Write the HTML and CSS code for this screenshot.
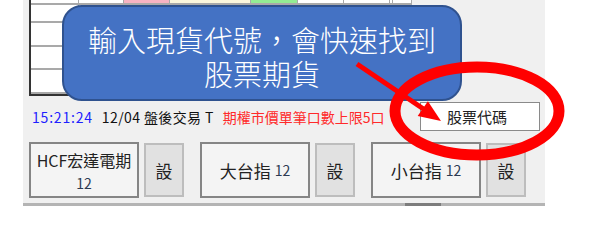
FILE: index.html
```html
<!DOCTYPE html>
<html lang="zh-Hant">
<head>
    <meta charset="UTF-8">
    <title>股票期貨</title>
    <link rel="stylesheet" href="styles.css">
</head>
<body>
    <div class="app">
        <div class="grid">
            <div class="cell"></div><div class="cell"></div><div class="cell pink"></div><div class="cell beige"></div><div class="cell green"></div><div class="cell"></div><div class="cell"></div><div class="cell"></div><div class="cell"></div>
            <div class="cell"></div><div class="cell"></div><div class="cell"></div><div class="cell"></div><div class="cell"></div><div class="cell"></div><div class="cell"></div><div class="cell"></div><div class="cell"></div>
            <div class="cell"></div><div class="cell"></div><div class="cell"></div><div class="cell"></div><div class="cell"></div><div class="cell"></div><div class="cell"></div><div class="cell"></div><div class="cell"></div>
            <div class="cell"></div><div class="cell"></div><div class="cell"></div><div class="cell"></div><div class="cell"></div><div class="cell"></div><div class="cell"></div><div class="cell"></div><div class="cell"></div>
            <div class="cell"></div><div class="cell"></div><div class="cell"></div><div class="cell"></div><div class="cell"></div><div class="cell"></div><div class="cell"></div><div class="cell"></div><div class="cell"></div>
        </div>

        <div class="status">
            <span class="time">15:21:24</span>
            <span class="date">12/04 盤後交易 T</span>
            <span class="warn">期權市價單筆口數上限5口</span>
            <div class="code-box">股票代碼</div>
        </div>

        <div class="buttons">
            <div class="pair">
                <div class="btn two-line">HCF宏達電期<br><span class="num">12</span></div>
                <div class="set">設</div>
            </div>
            <div class="pair">
                <div class="btn">大台指 <span class="num">12</span></div>
                <div class="set">設</div>
            </div>
            <div class="pair">
                <div class="btn">小台指 <span class="num">12</span></div>
                <div class="set">設</div>
            </div>
        </div>

        <div class="track"><div class="thumb"></div></div>

        <div class="callout">
            <div class="line">輸入現貨代號，會快速找到</div>
            <div class="line">股票期貨</div>
        </div>
    </div>

    <svg class="marks" width="600" height="240" viewBox="0 0 600 240">
        <ellipse cx="477" cy="111" rx="82" ry="44" fill="none" stroke="#ff0000" stroke-width="11"/>
        <line x1="357" y1="64" x2="425" y2="110" stroke="#ff0000" stroke-width="5"/>
        <polygon points="441,121 417.7,116 427.9,101.2" fill="#ff0000"/>
    </svg>
</body>
</html>
```

FILE: styles.css
```css
body {
    margin: 0;
    background-color: #ffffff;
    font-family: "Noto Sans CJK TC", "Noto Sans", sans-serif;
    position: relative;
    width: 600px;
    height: 240px;
    overflow: hidden;
}
.app {
    position: relative;
    margin-left: 23px;
    width: 522px;
    background-color: #f0f0f0;
    display: flex;
    flex-direction: column;
}
.grid {
    margin-left: 6px;
    width: 381px;
    display: grid;
    grid-template-columns: 48px 45px 46px 81px 47px 46px 46px 3px 19px;
    grid-template-rows: 5px 18px 24px 23px 24px;
    border-left: 2px solid #333;
    border-bottom: 2px solid #333;
    background-color: #ffffff;
}
.cell {
    box-sizing: border-box;
    border-right: 1px solid #a9a9a9;
    border-bottom: 2px solid #a9a9a9;
    background-color: #ffffff;
}
.pink {
    background-color: #f7b3c2;
}
.beige {
    background-color: #fbf6dc;
}
.green {
    background-color: #93ec93;
}
.status {
    margin-top: 6px;
    height: 29px;
    display: flex;
    align-items: center;
    padding-left: 9px;
    padding-right: 5px;
    font-size: 14px;
    white-space: nowrap;
}
.time {
    color: #1f1fff;
    letter-spacing: 0.8px;
}
.date {
    color: #111;
    margin-left: 9px;
    letter-spacing: 0.4px;
}
.warn {
    color: #ff2a2a;
    margin-left: 9px;
}
.code-box {
    margin-left: auto;
    box-sizing: border-box;
    width: 120px;
    height: 29px;
    background-color: #ffffff;
    border: 1px solid #8a8a8a;
    font-size: 15px;
    color: #222;
    display: flex;
    align-items: center;
    padding-left: 26px;
}
.buttons {
    margin-top: 11px;
    margin-left: 6px;
    display: flex;
    gap: 16px;
}
.pair {
    display: flex;
    align-items: center;
    gap: 5px;
}
.btn {
    box-sizing: border-box;
    width: 110px;
    height: 56px;
    background-color: #f4f4f4;
    border: 2px solid #858585;
    display: flex;
    align-items: center;
    justify-content: center;
    font-size: 17px;
    color: #222;
    white-space: pre;
}
.btn.two-line {
    font-size: 16px;
    line-height: 22px;
    white-space: nowrap;
    display: block;
    text-align: center;
    padding-top: 5px;
}
.num {
    font-size: 14px;
    color: #2c3a52;
}
.set {
    box-sizing: border-box;
    width: 40px;
    height: 54px;
    background-color: #e1e1e1;
    border: 2px solid #bdbdbd;
    display: flex;
    align-items: center;
    justify-content: center;
    font-size: 17px;
    color: #222;
}
.track {
    margin-top: 5px;
    height: 3px;
    background-color: #b4b4b4;
}
.thumb {
    margin-left: 382px;
    width: 36px;
    height: 3px;
    background-color: #7d7d7d;
}
.callout {
    position: absolute;
    left: 39px;
    top: 5px;
    box-sizing: border-box;
    width: 400px;
    height: 96px;
    background-color: #4472c4;
    border: 2px solid #2f528f;
    border-radius: 20px;
    color: #ffffff;
    font-size: 29px;
    font-weight: 300;
    text-align: center;
    padding-top: 17px;
    display: flex;
    flex-direction: column;
    gap: 4px;
}
.line {
    line-height: 30px;
}
.marks {
    position: absolute;
    left: 0;
    top: 0;
}
```
